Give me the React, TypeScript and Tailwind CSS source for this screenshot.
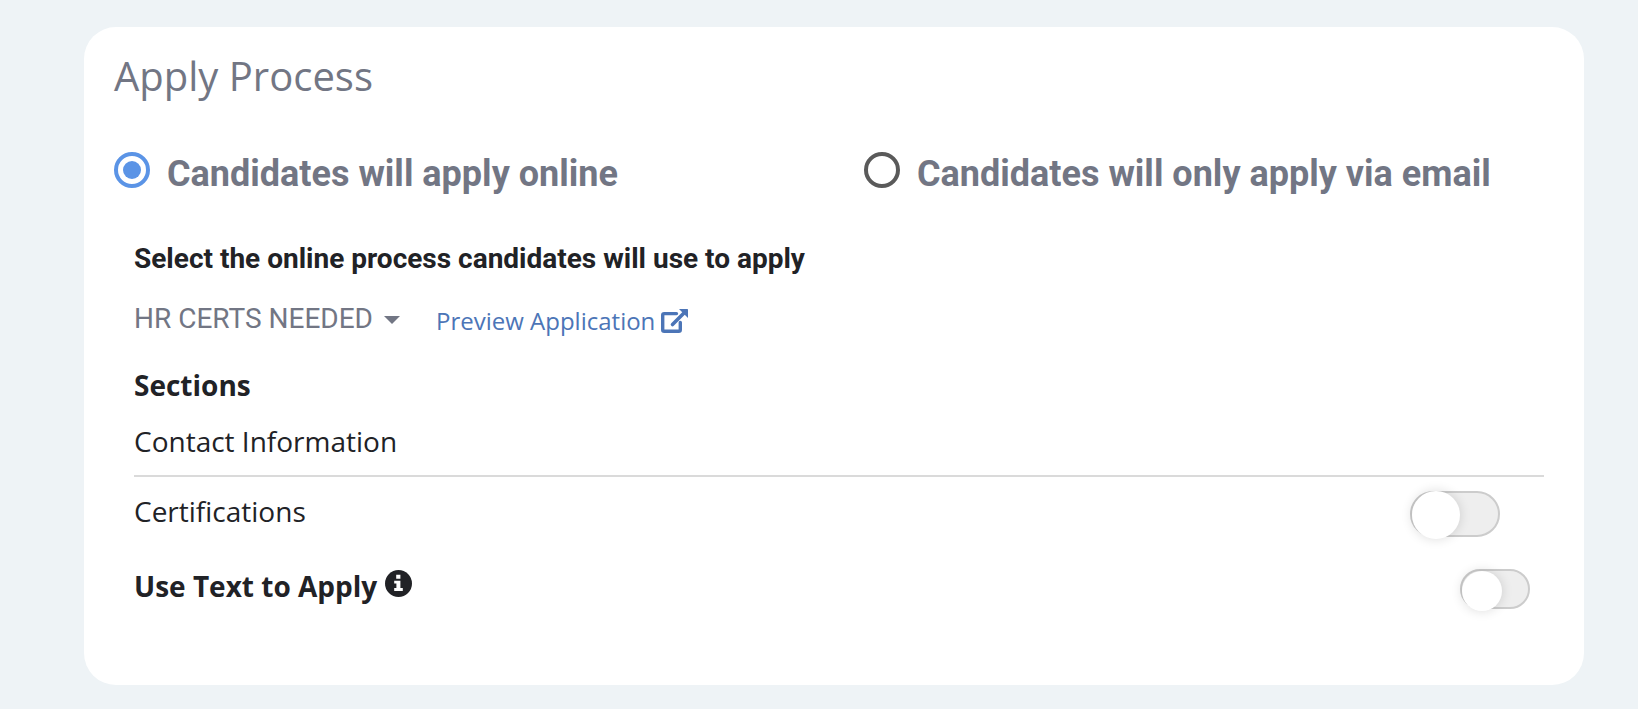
import React, { useState } from "react";

interface RadioOptionProps {
  id: string;
  label: string;
  checked: boolean;
  onChange: () => void;
}

function RadioOption({ id, label, checked, onChange }: RadioOptionProps) {
  return (
    <div className="flex items-start gap-[17px] px-[30px]">
      <input
        type="radio"
        id={id}
        name="applyMethod"
        checked={checked}
        onChange={onChange}
        className="grid size-9 shrink-0 appearance-none place-content-center rounded-full border-4 border-[#5a5a5a] before:size-[18px] before:rounded-full checked:border-[#5b94e6] checked:before:bg-[#5b94e6]"
      />
      <label
        htmlFor={id}
        className="font-[Roboto,sans-serif] text-[36px] leading-[44px] font-bold text-[#727684]"
      >
        {label}
      </label>
    </div>
  );
}

function ExternalLinkIcon() {
  return (
    <svg width="27" height="24" viewBox="0 0 27 24" fill="none" aria-hidden="true">
      <path
        d="M15.5 4.6H3.2Q1.7 4.6 1.7 6.1V20.8Q1.7 22.3 3.2 22.3H17.8Q19.3 22.3 19.3 20.8V13.5"
        stroke="currentColor"
        strokeWidth="3.4"
        strokeLinecap="round"
      />
      <path d="M11.5 15.5L23 4" stroke="currentColor" strokeWidth="3.6" strokeLinecap="round" />
      <path d="M18 0H26.4Q27 0 27 0.6V9Z" fill="currentColor" />
    </svg>
  );
}

function InfoIcon() {
  return (
    <svg width="27" height="27" viewBox="0 0 27 27" aria-hidden="true">
      <circle cx="13.5" cy="13.5" r="13.5" fill="currentColor" />
      <path
        d="M11.2 4.8H15.4V8.8H11.2ZM9.2 10.8H15.4V18H17.8V21H9.2V18H11.4V13.6H9.2Z"
        fill="white"
      />
    </svg>
  );
}

export default function App() {
  const [method, setMethod] = useState("online");

  return (
    <main className="min-h-screen bg-[#eef3f6] pt-[27px] pr-[54px] pb-6 pl-[84px] font-['Open_Sans',sans-serif] text-[28px] leading-10 text-[#212226]">
      <section className="rounded-[32px] bg-white pt-6 pb-[76px]">
        <h1 className="px-[30px] text-[40px] leading-[50px] text-[#727684]">
          Apply Process
        </h1>

        <div className="mt-[51px] grid grid-cols-2">
          <RadioOption
            id="apply-online"
            label="Candidates will apply online"
            checked={method === "online"}
            onChange={() => setMethod("online")}
          />
          <RadioOption
            id="apply-email"
            label="Candidates will only apply via email"
            checked={method === "email"}
            onChange={() => setMethod("email")}
          />
        </div>

        <div className="mt-[43px] pr-10 pl-[50px]">
          <label
            htmlFor="process"
            className="block font-[Roboto,sans-serif] font-bold"
          >
            Select the online process candidates will use to apply
          </label>

          <div className="mt-[18px] flex items-start gap-9">
            <div className="relative text-[#727684]">
              <select
                id="process"
                defaultValue="certs"
                className="field-sizing-content h-10 appearance-none pr-[27px] font-[Roboto,sans-serif]"
              >
                <option value="certs">HR CERTS NEEDED</option>
              </select>
              <svg
                width="16"
                height="8"
                viewBox="0 0 16 8"
                aria-hidden="true"
                className="pointer-events-none absolute top-[19px] right-0"
              >
                <path d="M0 0H16L8 8Z" fill="currentColor" />
              </svg>
            </div>
            <a
              href="#preview"
              className="flex items-center gap-[6px] text-[24px] leading-[48px] text-[#4c75b7]"
            >
              Preview Application
              <ExternalLinkIcon />
            </a>
          </div>

          <h2 className="mt-5 font-bold">Sections</h2>

          <div className="mt-4 border-b-2 border-[#dadada] pb-[14px]">
            Contact Information
          </div>

          <div className="flex items-start justify-between pt-[14px] pr-11">
            <label htmlFor="certifications">Certifications</label>
            <input
              type="checkbox"
              role="switch"
              id="certifications"
              className="relative h-[46px] w-[90px] appearance-none rounded-full border-2 border-[#cccccc] bg-[#eeeeee] before:absolute before:-top-[2px] before:left-0 before:size-12 before:rounded-full before:bg-white before:shadow-[0_0_12px_rgba(0,0,0,0.14)] checked:bg-[#5b94e6] checked:before:left-auto checked:before:right-0"
            />
          </div>

          <div className="mt-7 flex items-start justify-between pr-[14px]">
            <div className="flex items-start gap-2">
              <label htmlFor="text-to-apply" className="leading-[42px] font-bold">
                Use Text to Apply
              </label>
              <span className="pt-[5px]">
                <InfoIcon />
              </span>
            </div>
            <input
              type="checkbox"
              role="switch"
              id="text-to-apply"
              className="relative mt-1 h-10 w-[70px] appearance-none rounded-full border-2 border-[#cccccc] bg-[#eeeeee] before:absolute before:top-0 before:left-0 before:size-10 before:rounded-full before:bg-white before:shadow-[0_0_12px_rgba(0,0,0,0.14)] checked:bg-[#5b94e6] checked:before:left-auto checked:before:right-0"
            />
          </div>
        </div>
      </section>
    </main>
  );
}
